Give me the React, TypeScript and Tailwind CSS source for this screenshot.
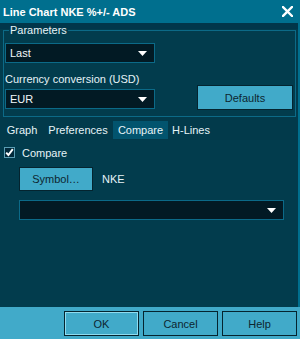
import React from "react";

const Arrow = () => (
  <svg width="9" height="5" viewBox="0 0 9 5" className="block">
    <polygon points="0,0 9,0 4.5,5" fill="#ffffff" />
  </svg>
);

const Dropdown = ({ text, className }: { text: string; className: string }) => (
  <div
    className={
      "flex items-center justify-between bg-[#021a24] border border-[#0b6a88] pl-[4px] pr-[7px] text-[#f2f8fa] " +
      className
    }
  >
    <span>{text}</span>
    <Arrow />
  </div>
);

export default function App() {
  return (
    <div
      className="w-[300px] h-[339px] flex flex-col bg-[#023c4d] text-[11px] leading-[14px] text-[#e6f3f7] overflow-hidden"
      style={{ fontFamily: '"Liberation Sans", Arial, sans-serif' }}
    >
      {/* Title bar */}
      <div className="h-[23px] shrink-0 bg-[#006f8e] flex items-center justify-between pl-[3px] pr-[7px]">
        <span className="font-bold text-white text-[11px]">Line Chart NKE %+/- ADS</span>
        <svg width="11" height="11" viewBox="0 0 11 11" className="block">
          <path d="M1 1 L10 10 M10 1 L1 10" stroke="#ffffff" strokeWidth="2.4" strokeLinecap="square" />
        </svg>
      </div>

      {/* Body */}
      <div className="flex-1 flex flex-col border-r-2 border-[#006f8e]">
        {/* Parameters */}
        <div className="bg-[linear-gradient(#01364a_0_6px,transparent_6px)] h-[94px] shrink-0">
          <fieldset className="ml-[3px] mr-[2px] h-[94px] border border-[#0c6a87] min-w-0">
            <legend className="ml-[5px] px-[1px] leading-[14px]">Parameters</legend>
            <Dropdown text="Last" className="ml-[1px] mt-[6px] w-[150px] h-[20px]" />
            <div className="flex items-end justify-between">
              <div className="flex flex-col ml-[1px]">
                <span className="mt-[9px]">Currency conversion (USD)</span>
                <Dropdown text="EUR" className="mt-[3px] w-[150px] h-[20px]" />
              </div>
              <div className="mr-[2px] -mb-[1px] w-[96px] h-[25px] bg-[#41aac9] border border-[#04242f] flex items-center justify-center text-[#0d2630]">
                Defaults
              </div>
            </div>
          </fieldset>
        </div>

        {/* Tabs */}
        <div className="h-[23px] shrink-0 bg-[#023a4b] flex items-end pl-[1px] pb-[1px]">
          <div className="w-[42px] h-[18px] flex items-center justify-center">Graph</div>
          <div className="w-[70px] h-[18px] flex items-center justify-center">Preferences</div>
          <div className="w-[55px] h-[18px] flex items-center justify-center bg-[#02546e]">Compare</div>
          <div className="w-[46px] h-[18px] flex items-center justify-center">H-Lines</div>
        </div>

        {/* Compare content */}
        <div className="flex-1 flex flex-col">
          <div className="flex items-center mt-[7px] ml-[4px] h-[11px]">
            <svg width="11" height="11" viewBox="0 0 11 11" className="block">
              <rect x="0.5" y="0.5" width="10" height="10" fill="#02293a" stroke="#5a9db3" />
              <path d="M2.2 5.6 L4.4 8 L8.8 2.2" stroke="#ffffff" strokeWidth="2" fill="none" />
            </svg>
            <span className="ml-[7px]">Compare</span>
          </div>
          <div className="flex items-center mt-[9px] ml-[19px]">
            <div className="w-[74px] h-[24px] bg-[#41aac9] border border-[#04242f] flex items-center justify-center text-[#0d2630]">
              Symbol…
            </div>
            <span className="ml-[9px]">NKE</span>
          </div>
          <Dropdown text="" className="mt-[9px] ml-[19px] w-[265px] h-[20px]" />
        </div>
      </div>

      {/* Footer */}
      <div className="h-[32px] shrink-0 bg-[#41aac9] flex items-start justify-end pt-[4px] pr-[3px] gap-[4px] text-[#0d2630]">
        <div className="w-[75px] h-[25px] border border-[#04242f] flex">
          <div className="flex-1 border border-[#8fdcf0] flex items-center justify-center">OK</div>
        </div>
        <div className="w-[75px] h-[25px] border border-[#04242f] flex items-center justify-center">Cancel</div>
        <div className="w-[75px] h-[25px] border border-[#04242f] flex items-center justify-center">Help</div>
      </div>
    </div>
  );
}
